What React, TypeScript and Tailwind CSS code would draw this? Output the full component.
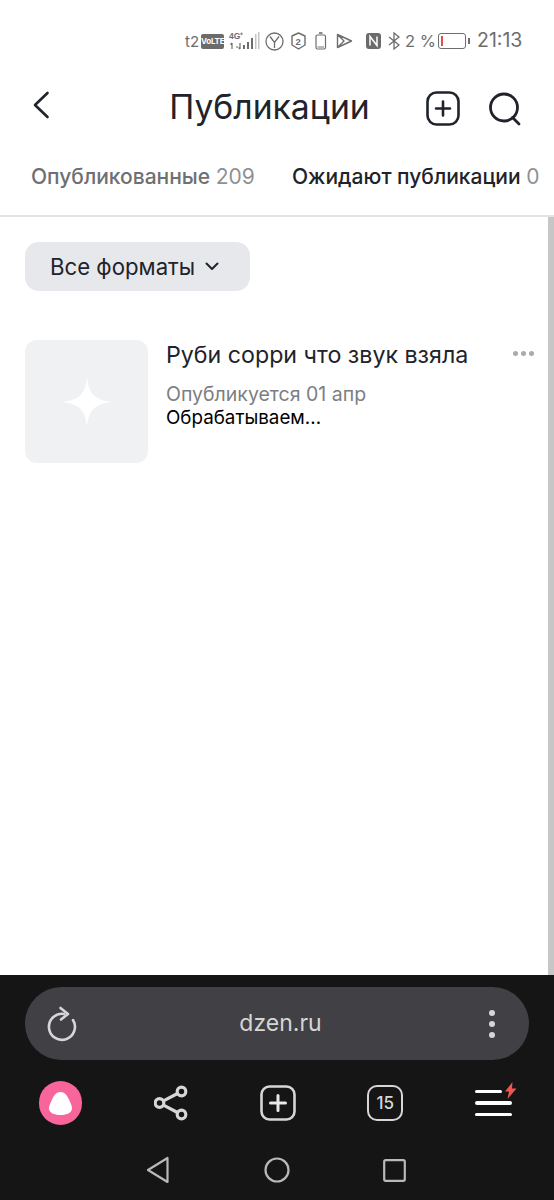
const font = { fontFamily: '"Inter", "Noto Sans", sans-serif' };

function StatusBar() {
  return (
    <div className="h-[72px] flex items-start justify-end pt-[29px] pr-[31px] text-[#6d6d6d]">
      <div className="h-[24px] flex items-center">
        <span className="text-[15px] leading-none w-[16px]">t2</span>
        <span className="w-[23px] h-[15px] bg-[#6b6b6b] rounded-[2px] text-white text-[8px] font-bold leading-[15px] text-center tracking-[-0.2px]">VoLTE</span>
        <svg className="ml-[5px]" width="31" height="20" viewBox="0 0 31 20" fill="#6d6d6d">
          <text x="0" y="8" fontSize="8.500" fontWeight="700" fontFamily="Liberation Sans">4G⁺</text>
          <path d="M3 12v6M1.500 13.500L3 12M7 16h2M11 12v6M9.500 16.500L11 18" stroke="#6d6d6d" strokeWidth="1.200" fill="none" />
          <rect x="14" y="14" width="2" height="4" />
          <rect x="18" y="11" width="2" height="7" />
          <rect x="22" y="7" width="2" height="11" />
          <rect x="26" y="3" width="1.500" height="15" fill="#c4c4c4" />
          <rect x="29" y="1" width="1.500" height="17" fill="#c4c4c4" />
        </svg>
        <svg className="ml-[5px]" width="19" height="19" viewBox="0 0 19 19" fill="none" stroke="#6d6d6d" strokeWidth="1.300">
          <circle cx="9.500" cy="9.500" r="8.500" />
          <path d="M5 4.500l4.500 6 4.500-6M9.500 10.500V16" />
        </svg>
        <svg className="ml-[7px]" width="15" height="18" viewBox="0 0 15 18" fill="none" stroke="#6d6d6d" strokeWidth="1.400">
          <path d="M7.500 1L14 4v9l-6.500 4L1 13V4z" strokeLinejoin="round" />
          <text x="4.500" y="12.800" fontSize="9.500" fontWeight="700" stroke="none" fill="#6d6d6d" fontFamily="Liberation Sans">2</text>
        </svg>
        <svg className="ml-[9px]" width="12" height="18" viewBox="0 0 12 18" fill="none" stroke="#6d6d6d" strokeWidth="1.200">
          <rect x="1" y="3" width="9.500" height="14" rx="1.500" />
          <path d="M4 1h3.500" strokeWidth="1.600" />
          <rect x="2.500" y="14" width="6.500" height="2" fill="#b9b9b9" stroke="none" />
        </svg>
        <svg className="ml-[9px]" width="17" height="16" viewBox="0 0 17 16" fill="none" stroke="#6d6d6d" strokeWidth="1.400">
          <path d="M1.500 1.500L15.500 8 1.500 14.500zM1.500 1.500L8 8 1.500 14.500" strokeLinejoin="round" />
        </svg>
        <svg className="ml-[13px]" width="15" height="16" viewBox="0 0 15 16">
          <rect width="15" height="16" rx="3" fill="#6b6b6b" />
          <path d="M4 12.500V3.500l7 9V3.500" fill="none" stroke="#fff" strokeWidth="1.500" />
        </svg>
        <svg className="ml-[7px]" width="12" height="18" viewBox="0 0 12 18" fill="none" stroke="#6d6d6d" strokeWidth="1.300">
          <path d="M1 5l10 8-5 4V1l5 4-10 8" />
        </svg>
        <span className="ml-[5px] text-[16.500px] leading-none w-[33px] whitespace-nowrap">2 %</span>
        <div className="w-[28px] h-[16px] rounded-[3px] border border-[#6d6d6d] flex items-center pl-[2px]">
          <div className="w-[1.500px] h-[10px] bg-[#d9534f]" />
        </div>
        <div className="ml-[2px] w-[2px] h-[6px] bg-[#6d6d6d]" />
        <span className="ml-[7px] text-[19.500px] leading-none w-[46px] whitespace-nowrap">21:13</span>
      </div>
    </div>
  );
}

function Header() {
  return (
    <div className="h-[72px] relative flex items-center justify-center pr-[15px]">
      <svg className="absolute left-[32px] top-[19px]" width="18" height="28" viewBox="0 0 18 28" fill="none" stroke="#20232a" strokeWidth="2.600" strokeLinecap="round" strokeLinejoin="round">
        <path d="M15.500 2L3 14l12.500 12" />
      </svg>
      <h1 className="text-[33.700px] leading-none font-normal text-[#20232a] -translate-y-[1px]">Публикации</h1>
      <svg className="absolute left-[426px] top-[19px]" width="35" height="35" viewBox="0 0 35 35" fill="none" stroke="#20232a" strokeWidth="2.600" strokeLinecap="round">
        <rect x="1.500" y="1.500" width="31" height="32" rx="9" />
        <path d="M17 10.500v14M10 17.500h14" />
      </svg>
      <svg className="absolute left-[488px] top-[20px]" width="34" height="34" viewBox="0 0 34 34" fill="none" stroke="#20232a" strokeWidth="2.800" strokeLinecap="round">
        <circle cx="16" cy="15.500" r="13.500" />
        <path d="M24.500 25.500L31 32" />
      </svg>
    </div>
  );
}

function Tabs() {
  return (
    <div className="h-[73px] flex items-center pl-[31px] pb-[5px] border-b-2 border-[#e3e3e5] text-[21px] whitespace-nowrap">
      <span className="text-[#6e7074] w-[261px] font-medium">
        Опубликованные <span className="font-normal text-[#8f9195]">209</span>
      </span>
      <span className="text-[#20232a] font-medium">
        Ожидают публикации <span className="font-normal text-[#8f9195]">0</span>
      </span>
    </div>
  );
}

function Content() {
  return (
    <div className="relative flex-1 pl-[25px] pt-[25px]">
      <div className="absolute right-0 top-0 bottom-0 w-[6px] bg-[#c6c6c6]" />
      <div className="w-[225px] h-[49px] rounded-[14px] bg-[#e7e8ec] flex items-center pl-[25px] text-[#20232a] text-[22.200px]">
        Все форматы
        <svg className="ml-[10px]" width="14" height="9" viewBox="0 0 14 9" fill="none" stroke="#20232a" strokeWidth="2" strokeLinecap="round" strokeLinejoin="round">
          <path d="M1.500 1.500L7 7l5.500-5.500" />
        </svg>
      </div>
      <div className="mt-[49px] flex">
        <div className="w-[123px] h-[123px] rounded-[12px] bg-[#f0f1f3] flex items-center justify-center">
          <svg width="50" height="50" viewBox="0 0 50 50" fill="#fff">
            <path d="M25 0C26.500 15 31 23 50 25 31 27 26.500 35 25 50 23.500 35 19 27 0 25 19 23 23.500 15 25 0z" />
          </svg>
        </div>
        <div className="ml-[18px] flex flex-col">
          <div className="text-[23.200px] leading-[31px] text-[#20232a]">Руби сорри что звук взяла</div>
          <div className="mt-[11px] text-[19.500px] leading-[24px] text-[#7c7e82]">Опубликуется 01 апр</div>
          <div className="text-[18.800px] leading-[24px] text-black">Обрабатываем...</div>
        </div>
        <div className="absolute left-[513px] top-[134px] flex gap-[3px]">
          <div className="w-[5px] h-[5px] rounded-full bg-[#a9abae]" />
          <div className="w-[5px] h-[5px] rounded-full bg-[#a9abae]" />
          <div className="w-[5px] h-[5px] rounded-full bg-[#a9abae]" />
        </div>
      </div>
    </div>
  );
}

function Browser() {
  return (
    <div className="h-[225px] bg-[#151516] flex flex-col">
      <div className="mt-[12px] mx-[25px] h-[73px] rounded-[37px] bg-[#414145] flex items-center justify-between pl-[21px] pr-[34px]">
        <svg width="32" height="36" viewBox="0 0 32 36" fill="none" stroke="#d6d6d6" strokeWidth="2.600" strokeLinecap="round" strokeLinejoin="round">
          <path d="M18 8A13 13 0 1 0 27 14" />
          <path d="M14.500 2L22 8l-7 5.500" />
        </svg>
        <span className="text-[23px] leading-none text-[#d6d6d6] -translate-x-[3px]">dzen.ru</span>
        <div className="flex flex-col gap-[5px]">
          <div className="w-[6px] h-[6px] rounded-full bg-[#d6d6d6]" />
          <div className="w-[6px] h-[6px] rounded-full bg-[#d6d6d6]" />
          <div className="w-[6px] h-[6px] rounded-full bg-[#d6d6d6]" />
        </div>
      </div>
      <div className="mt-[21px] h-[44px] flex items-center justify-between pl-[39px] pr-[38px]">
        <div className="w-[43px] h-[44px] rounded-full bg-[#f7659a] flex items-center justify-center">
          <svg width="25" height="23" viewBox="0 0 25 23" fill="#fff">
            <path d="M12.500 0c4 0 6.500 3 8.500 7.500 2 4.500 4 8 2.500 11-1.500 3-5.500 4.500-11 4.500S3 21.500 1.500 18.500C0 15.500 2 12 4 7.500 6 3 8.500 0 12.500 0z" />
          </svg>
        </div>
        <svg width="34" height="36" viewBox="0 0 34 36" fill="none" stroke="#d6d6d6" strokeWidth="3.200">
          <circle cx="5.500" cy="18" r="4.300" />
          <circle cx="27.500" cy="6.500" r="4.300" />
          <circle cx="27.500" cy="29.500" r="4.300" />
          <path d="M9.500 15.800L23.500 8.500M9.500 20.200L23.500 27.500" />
        </svg>
        <svg width="36" height="36" viewBox="0 0 36 36" fill="none" stroke="#d6d6d6" strokeWidth="2.600" strokeLinecap="round">
          <rect x="1.500" y="1.500" width="33" height="33" rx="8" />
          <path d="M18 10.500v15M10.500 18h15" stroke="#e8e8e8" strokeWidth="3" />
        </svg>
        <div className="w-[36px] h-[36px] rounded-[10px] border-[2.600px] border-[#d6d6d6] flex items-center justify-center text-[#d6d6d6] text-[17px] font-medium leading-none">15</div>
        <div className="relative w-[41px] h-[36px] flex flex-col justify-center items-start gap-[8px]">
          <div className="w-[27px] h-[3.500px] rounded-full bg-white" />
          <div className="w-[37px] h-[3.500px] rounded-full bg-white" />
          <div className="w-[37px] h-[3.500px] rounded-full bg-white" />
          <svg className="absolute right-[-1px] -top-[3px]" width="12" height="17" viewBox="0 0 12 17" fill="#f0564f">
            <path d="M7.500 0L0 9.500h4L2.500 17 11.500 6.500H7z" />
          </svg>
        </div>
      </div>
      <div className="mt-[31px] flex items-center">
        <svg className="ml-[146px]" width="24" height="28" viewBox="0 0 24 28" fill="none" stroke="#b9b9b9" strokeWidth="2.200" strokeLinejoin="round">
          <path d="M21.500 2v24L2 14z" />
        </svg>
        <svg className="ml-[94px]" width="26" height="26" viewBox="0 0 26 26" fill="none" stroke="#b9b9b9" strokeWidth="2.200">
          <circle cx="13" cy="13" r="11.500" />
        </svg>
        <svg className="ml-[93px]" width="23" height="23" viewBox="0 0 23 23" fill="none" stroke="#b9b9b9" strokeWidth="2.200">
          <rect x="1.200" y="1.200" width="20.600" height="20.600" rx="1.500" />
        </svg>
      </div>
    </div>
  );
}

export default function App() {
  return (
    <div className="w-[554px] h-[1200px] bg-white flex flex-col overflow-hidden" style={font}>
      <StatusBar />
      <Header />
      <Tabs />
      <Content />
      <Browser />
    </div>
  );
}
